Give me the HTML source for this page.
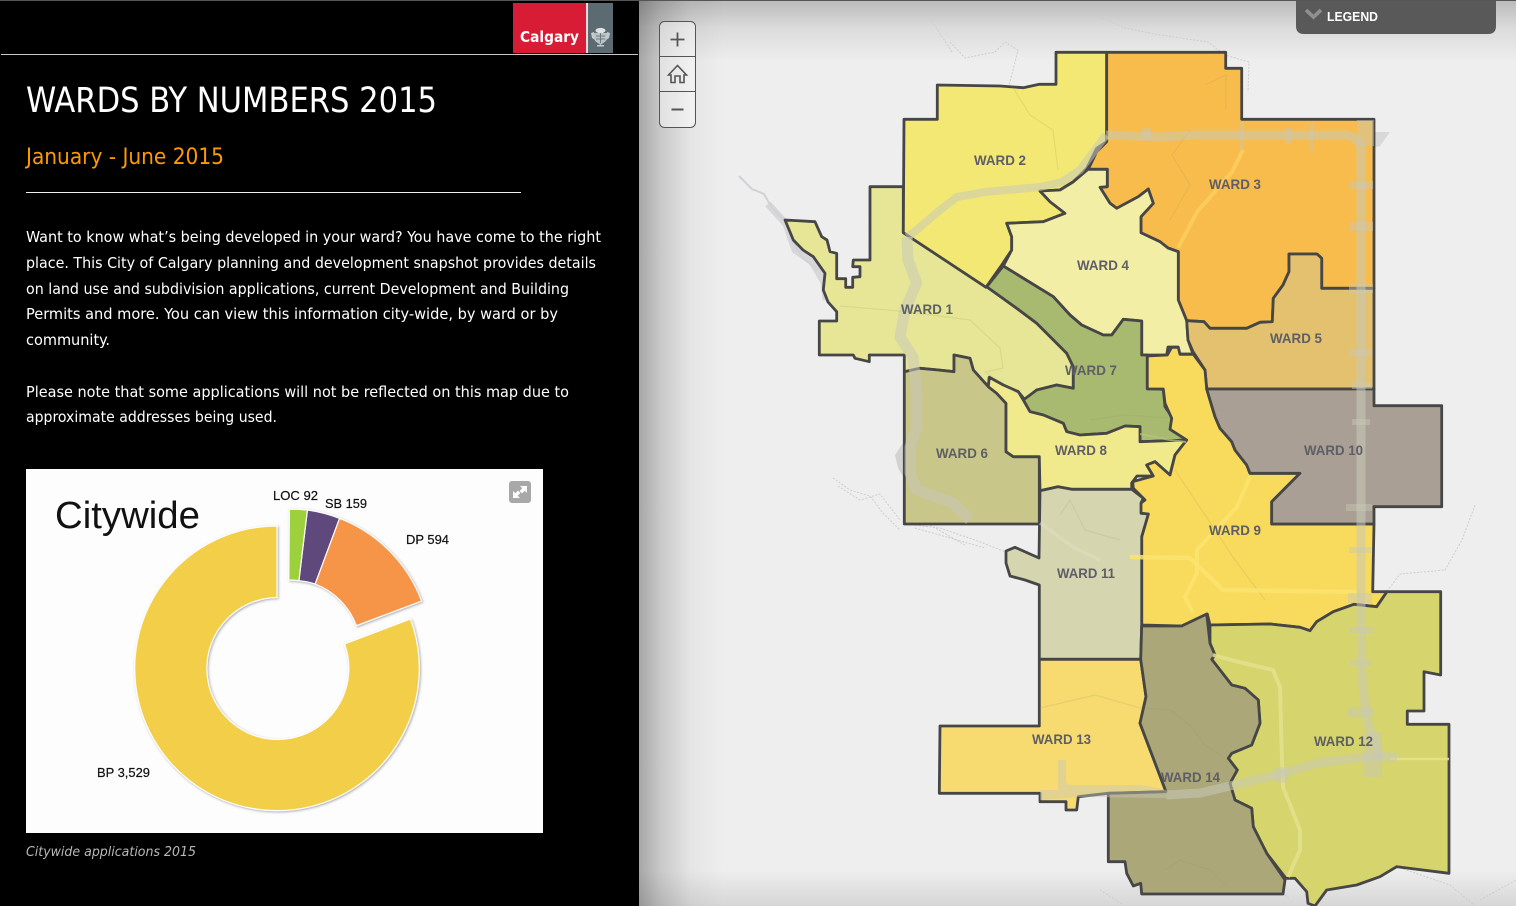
<!DOCTYPE html>
<html lang="en"><head><meta charset="utf-8"><title>Wards by Numbers 2015</title>
<style>
html,body{margin:0;padding:0;background:#000;width:1516px;height:906px;overflow:hidden}
svg{display:block}
.b{font-family:"DejaVu Sans",sans-serif;font-stretch:condensed;font-size:15.5px;fill:#fff}
.w{font-family:"Liberation Sans",sans-serif;font-weight:bold;font-size:14px;fill:#5e5e66}
.c{font-family:"Liberation Sans",sans-serif;font-size:13px;fill:#111;stroke:#111;stroke-width:.2}
.wd polygon{stroke:#464646;stroke-width:2.8;stroke-linejoin:round}
</style></head><body>
<svg xmlns="http://www.w3.org/2000/svg" width="1516" height="906" viewBox="0 0 1516 906">
<defs>
<linearGradient id="gl" x1="0" x2="1" y1="0" y2="0"><stop offset="0" stop-color="#000" stop-opacity=".3"/><stop offset=".25" stop-color="#000" stop-opacity=".16"/><stop offset=".6" stop-color="#000" stop-opacity=".04"/><stop offset="1" stop-color="#000" stop-opacity="0"/></linearGradient>
<linearGradient id="gt" x1="0" x2="0" y1="0" y2="1"><stop offset="0" stop-color="#000" stop-opacity=".22"/><stop offset=".45" stop-color="#000" stop-opacity=".08"/><stop offset="1" stop-color="#000" stop-opacity="0"/></linearGradient>
<linearGradient id="gb" x1="0" x2="0" y1="1" y2="0"><stop offset="0" stop-color="#000" stop-opacity=".1"/><stop offset="1" stop-color="#000" stop-opacity="0"/></linearGradient>
<filter id="sh" x="-10%" y="-10%" width="120%" height="120%"><feDropShadow dx="1" dy="1" stdDeviation="1.2" flood-color="#777" flood-opacity=".6"/></filter>
</defs>

<!-- map background -->
<rect x="639" y="0" width="877" height="906" fill="#eee"/>
<rect x="639" y="0" width="877" height="62" fill="url(#gt)"/>
<rect x="639" y="870" width="877" height="36" fill="url(#gb)"/>
<rect x="639" y="0" width="85" height="906" fill="url(#gl)"/>

<!-- rivers outside the city -->
<g fill="none" stroke="#d2d2d6">
<path d="M739 176L752 189L764 194L772 208L786 222L792 240L803 258L818 270" stroke-width="2"/>
<path d="M768 204L786 224L795 250L812 262L824 282L826 300" stroke-width="7" opacity=".85"/>
</g>
<g fill="none" stroke="#cdcdcd" stroke-width="1" stroke-dasharray="2 1.5">
<path d="M930 18L952 52M950 42L965 58L995 52L1005 42L1018 50L1009 86"/>
<path d="M1092 14L1125 28L1160 35L1208 42L1225 55L1249 62L1248 92"/>
<path d="M833 478L850 490L870 496L882 512L900 530"/>
<path d="M838 486L860 500L880 494L900 520M905 524L940 528L975 540L1006 552"/>
<path d="M915 528L950 538L985 548M930 525L965 545"/>
<path d="M1475 505L1462 540L1445 570L1400 574L1388 590"/>
<path d="M1270 880L1290 900M1400 868L1450 885L1475 906M1100 890L1125 906M1480 900L1516 880"/>
</g>
<path d="M1374 132L1390 132L1380 146L1374 148Z" fill="#d8d8d8"/>
<path d="M895 455L905 440L905 480L898 468Z" fill="#d2d2d2"/>

<!-- wards -->
<g class="wd">
<polygon fill="#e6e696" points="986.7,286.7 903.3,232.7 903.3,186.7 870,186.7 870,260 853.3,260 852.7,266.7 860,266.7 860,276.7 852.7,277.3 852.7,287.3 845.7,287.3 845.7,278.7 836.7,278.7 836.7,253.3 830,251.7 827,240 821.7,236.7 815,221.7 785,220 790,232 793.3,240 803,250 813.3,256.7 825,273.3 823.3,290 828,302 836.7,311.7 836.7,321 819.3,321 819.3,355 853.3,355 855,358.3 869.3,361.7 869.3,355 904.3,355 904.3,371.7 920,368.3 938.3,370 954,371.7 954,355 970,358.3 973.3,370 988.3,386.7 989.3,377.3 1003.3,385 1018.3,391.7 1025,400 1036.7,390 1056.7,385 1073.3,388.3 1073.3,366.7 1066.7,353.3 1056.7,343.3 1036.7,323.3 1016.7,308.3"/>
<polygon fill="#f2e873" points="903.3,232.7 904,119.3 937.3,119.3 937.3,85 1000,86 1023.3,87.7 1039.3,84.3 1056,84.3 1056,52.3 1106.7,52.3 1106.7,141.7 1096.7,148.3 1086.7,168.3 1073.3,181.7 1060,190 1040,191 1050,201.7 1065,213.3 1043.3,221.7 1006.7,223.3 1011.7,236.7 1011.7,250 1001.7,265 986,287.3"/>
<polygon fill="#f8bc4c" points="1106.7,52.3 1225.7,52.3 1225.7,68.3 1241.7,68.3 1241.7,119.3 1374,119.3 1374,288.3 1321.7,288.3 1321.7,258.3 1317,254 1289,254 1289,271.7 1283,285 1273.3,298.3 1272.3,321.7 1260,322.3 1246.7,328.3 1210,328.3 1204,321.7 1186.7,320.7 1178.3,300 1178.3,251.7 1168,248 1160,241.7 1141,232.7 1141,216.7 1153.3,203.3 1148.3,189 1138.3,196.7 1116.7,208.3 1110,203.3 1100,187.3 1107.3,186.7 1107.3,169.3 1088.3,169.3 1096.7,151.7 1106.7,141.7"/>
<polygon fill="#f3eea6" points="1040,191 1060,190 1073,182 1088,169.3 1107.3,169.3 1107.3,186.7 1100,187.3 1110,203.3 1116.7,208.3 1138.3,196.7 1148.3,189 1153.3,203.3 1141,216.7 1141,232.7 1160,241.7 1168,248 1178.3,251.7 1178.3,300 1186.7,320.7 1188,340 1193,354 1178,354 1178,347 1168,347 1166.7,355 1141.7,355 1141.7,321 1123.3,319.3 1111.7,335 1103.3,335 1081.7,325 1070,315 1053.3,296.7 1003.3,266 1011.7,250 1011.7,236.7 1006.7,223.3 1043.3,221.7 1065,213.3 1050,201.7"/>
<polygon fill="#e3c16e" points="1186.7,320.7 1204,321.7 1210,328.3 1246.7,328.3 1260,322.3 1272.3,321.7 1273.3,298.3 1283,285 1289,271.7 1289,254 1317,254 1321.7,258.3 1321.7,288.3 1374,288.3 1374,389 1206.7,389 1205,370 1193,351.7 1188,340"/>
<polygon fill="#c9c68a" points="904.3,371.7 920,368.3 938.3,370 954,371.7 954,355 970,358.3 973.3,370 988.3,386.7 996.7,393.3 1006,403.3 1006,451.7 1013.3,456.7 1039.3,456.7 1039.3,524 904.3,524"/>
<polygon fill="#a8ba70" points="1003.3,266 1053.3,296.7 1070,315 1081.7,325 1103.3,335 1111.7,335 1123.3,319.3 1141.7,321 1141.7,355 1147.3,355 1147.3,388.3 1163.3,389.3 1165,406.7 1171.7,416.7 1171.7,430 1186.7,440 1140,441.7 1140,426.7 1125,426 1106.7,433.3 1080,435 1066.7,431.7 1063.3,423.3 1043.3,415 1030,411.7 1023.3,400 1036.7,390 1056.7,385 1073.3,388.3 1073.3,366.7 1066.7,353.3 1056.7,343.3 1036.7,323.3 1016.7,308.3 986.7,286.7"/>
<polygon fill="#f1ea8d" points="989.3,377.3 1003.3,385 1018.3,391.7 1023.3,400 1030,411.7 1043.3,415 1063.3,423.3 1066.7,431.7 1080,435 1106.7,433.3 1125,426 1140,426.7 1140,441.7 1186.7,440 1175,455 1170,475 1155,461.7 1146.7,465 1153.3,476 1137,476 1131.7,483 1131.7,489.3 1071.7,489.3 1058,486.7 1040,490.7 1039.3,456.7 1013.3,456.7 1006,451.7 1006,403.3 996.7,393.3 988.3,386.7"/>
<polygon fill="#f8da5c" points="1147.3,356 1167.3,355 1171.7,347.3 1178.3,347.3 1180,354.3 1193.3,354.3 1205,370 1206.7,389 1215,416.7 1220,428.3 1231.7,441.7 1235,450 1246.7,465 1250,473.3 1300,473.3 1271.7,501.7 1271.7,524 1374,524 1372.7,591.7 1387,591.7 1376.7,606.7 1354,604.3 1333.3,611.7 1316.7,621.7 1310,630.7 1300,627.3 1270,624 1210,625 1207.3,614 1181.7,626 1141.7,625 1141.7,536.7 1148.3,514 1140.7,513.3 1140.7,503.3 1145,500 1133.3,488.3 1132.7,481.7 1153.3,476 1146.7,465 1155,461.7 1170,475 1175,455 1186.7,440 1170,429.3 1171.7,418.3 1165,403.3 1163.3,389 1147.3,389"/>
<polygon fill="#a99f94" points="1206.7,389 1374,389 1374,405.7 1441.7,405.7 1441.7,506.7 1374,506.7 1374,524 1271.7,524 1271.7,501.7 1300,473.3 1250,473.3 1246.7,465 1235,450 1231.7,441.7 1220,428.3 1215,416.7"/>
<polygon fill="#d5d5b0" points="1040,490.7 1058,486.7 1071.7,489.3 1131.7,489.3 1143.3,498.3 1141,503 1141,513.3 1148.3,514 1141.7,536.7 1141.7,625 1140.7,659.3 1039.3,659.3 1039.3,585 1025,580 1010,576 1006,563 1006,551 1015,547.3 1039,558"/>
<polygon fill="#d6d46c" points="1387,591.7 1440.7,591.7 1440.7,675 1424,671.7 1424,711 1407.3,711 1407.3,724.3 1449,724.3 1449,873.3 1396.7,866.7 1380,876.7 1356.7,885 1326.7,890 1315,906 1308,903.3 1306.7,891.7 1295,878.3 1286,878.3 1266.7,853.3 1253.3,826.7 1251.7,808.3 1235,800 1230,783.3 1237.3,770 1228.3,758.3 1231.7,753.3 1251.7,745 1260,723.3 1258.3,700 1245,688.3 1231.7,685 1211.7,659.3 1215,655 1210,643.3 1210,625 1270,624 1300,627.3 1310,630.7 1316.7,621.7 1333.3,611.7 1354,604.3 1376.7,606.7"/>
<polygon fill="#f7da70" points="1039.3,659.3 1140.7,659.3 1146,696.7 1140,723.3 1166,791.7 1108.3,793.3 1078.3,796.7 1076.7,810 1066,810 1066,801.7 1040,801.7 1040,793.3 939.3,793.3 940,726 1039.3,726"/>
<polygon fill="#aba778" points="1141.7,626 1181.7,626 1206.7,614 1210,643.3 1215,655 1211.7,659.3 1231.7,685 1245,688.3 1258.3,700 1260,723.3 1251.7,745 1231.7,753.3 1228.3,758.3 1237.3,770 1230,783.3 1235,800 1251.7,808.3 1253.3,826.7 1266.7,853.3 1285,880 1283,894 1141.7,894 1140.7,883.3 1133.3,886 1126.7,873.3 1125,861.7 1108.3,861.7 1108.3,793.3 1166,791.7 1140,723.3 1146,696.7 1140.7,659.3"/>
</g>

<!-- subtle water/streets -->
<g fill="none" stroke="#8a8a62" stroke-opacity=".15" stroke-width="1.2">
<path d="M1012 86L1030 115L1053 130L1058 170"/>
<path d="M1205 85L1226 75L1226 110M1190 130L1172 155L1190 185L1170 220"/>
<path d="M840 306L900 311L970 320L1000 348L1003 368L985 372L1020 395"/>
<path d="M1168 418L1125 415L1090 420"/>
<path d="M1060 515L1070 500L1085 530L1120 540"/>
<path d="M1040 708L1095 695L1140 708L1170 710L1190 725L1205 745L1220 755"/>
<path d="M1165 870L1180 860L1210 870L1225 885"/>
<path d="M1175 470L1235 560L1265 600"/>
</g>

<!-- light roads -->
<g fill="none" stroke-linejoin="round">
<path d="M1243 150L1232 172L1197 212L1178 248" stroke="#fbcf60" stroke-opacity=".8" stroke-width="4"/>
<path d="M1250 477L1237 507L1197 550L1197 573L1185 597L1193 613" stroke="#fbe36e" stroke-width="4" stroke-opacity=".8"/>
<path d="M1130 557L1190 558L1223 590L1357 592" stroke="#fbe36e" stroke-width="4.5" stroke-opacity=".85"/>
<path d="M1213 655L1243 663L1273 670L1280 687L1282 760L1283 787L1300 830L1300 850L1288 877" stroke="#e3e18c" stroke-width="4" stroke-opacity=".85"/>
<path d="M1390 759L1449 759" stroke="#e3e18c" stroke-width="2.5" stroke-opacity=".9"/>
<path d="M1040 523L1073 547L1100 560" stroke="#e2e2c4" stroke-width="3.5" stroke-opacity=".5"/>
<path d="M1140 434L1170 440L1186 442" stroke="#b9c67e" stroke-width="2" stroke-opacity=".7"/>
</g>

<!-- highways -->
<g fill="none" stroke-linejoin="round" stroke="#c8c8b8" stroke-opacity=".55">
<path d="M1106 135L1160 137L1195 135L1240 135L1345 135Q1361 137 1361 152L1361 600L1362 680L1367 720L1380 757" stroke-width="9"/>
<path d="M1106 135L1095 150L1080 170L1062 182L1040 187L985 192L957 197L940 210L913 233L907 237" stroke-width="8"/>
<path d="M907 237L908 260L916.7 283L905 310L900 337L913 357L916.7 393L916.7 427L910 447L910 473L916.7 490L953 503L970 520" stroke-width="11"/>
<path d="M1166 795L1200 793L1277 775L1317 763L1367 757L1397 757" stroke-width="9"/>
</g>
<g fill="#c8c8b8" fill-opacity=".45" stroke="none">
<path d="M1357 120H1374V146H1357Z"/>
<rect x="1349" y="181" width="24" height="8"/><rect x="1349" y="222" width="24" height="9"/><rect x="1349" y="284" width="24" height="9"/>
<rect x="1349" y="349" width="23" height="7"/><rect x="1352" y="382" width="20" height="7"/><rect x="1352" y="419" width="18" height="6"/>
<rect x="1346" y="504" width="26" height="7"/><rect x="1349" y="547" width="22" height="6"/><rect x="1348" y="593" width="24" height="10"/>
<rect x="1350" y="627" width="23" height="6"/><rect x="1350" y="660" width="22" height="6"/><rect x="1348" y="707" width="25" height="10"/>
<rect x="1364" y="732" width="18" height="45"/><rect x="1240" y="122" width="4" height="28"/><rect x="1310" y="124" width="3" height="26"/>
<rect x="1285" y="128" width="6" height="16"/><rect x="1141" y="128" width="10" height="12"/>
<ellipse cx="1281" cy="775" rx="9" ry="8"/>
<path d="M1058 760h8v21q0 4 8 4L1143 785L1166 790L1166 798L1078 797L1040 800L1040 790L1058 790Z"/>
</g>

<!-- ward labels -->
<g>
<text class="w" x="974" y="165" textLength="52" lengthAdjust="spacingAndGlyphs">WARD 2</text>
<text class="w" x="1209" y="189" textLength="52" lengthAdjust="spacingAndGlyphs">WARD 3</text>
<text class="w" x="1077" y="270" textLength="52" lengthAdjust="spacingAndGlyphs">WARD 4</text>
<text class="w" x="901" y="314" textLength="52" lengthAdjust="spacingAndGlyphs">WARD 1</text>
<text class="w" x="1270" y="343" textLength="52" lengthAdjust="spacingAndGlyphs">WARD 5</text>
<text class="w" x="1065" y="375" textLength="52" lengthAdjust="spacingAndGlyphs">WARD 7</text>
<text class="w" x="1055" y="455" textLength="52" lengthAdjust="spacingAndGlyphs">WARD 8</text>
<text class="w" x="936" y="458" textLength="52" lengthAdjust="spacingAndGlyphs">WARD 6</text>
<text class="w" x="1304" y="455" textLength="59" lengthAdjust="spacingAndGlyphs">WARD 10</text>
<text class="w" x="1209" y="535" textLength="52" lengthAdjust="spacingAndGlyphs">WARD 9</text>
<text class="w" x="1057" y="578" textLength="58" lengthAdjust="spacingAndGlyphs">WARD 11</text>
<text class="w" x="1032" y="744" textLength="59" lengthAdjust="spacingAndGlyphs">WARD 13</text>
<text class="w" x="1314" y="746" textLength="59" lengthAdjust="spacingAndGlyphs">WARD 12</text>
<text class="w" x="1161" y="782" textLength="59" lengthAdjust="spacingAndGlyphs">WARD 14</text>
</g>

<!-- zoom controls -->
<rect x="659.5" y="21.5" width="36" height="106" rx="5" fill="#fff" fill-opacity=".45" stroke="#555"/>
<path d="M660 56.5H695M660 91.5H695" stroke="#555" fill="none"/>
<path d="M670.5 39.5H684.5M677.5 32.5V46.5" stroke="#555" stroke-width="1.8" fill="none"/>
<path d="M671.5 109.5H683.5" stroke="#555" stroke-width="2" fill="none"/>
<path d="M668.5 75L677.5 65.5L686.5 75L684 75L684 82.5L680 82.5L680 76L675 76L675 82.5L671 82.5L671 75Z" fill="none" stroke="#555" stroke-width="1.6" stroke-linejoin="miter"/>

<!-- legend -->
<path d="M1296 0H1496V26Q1496 34 1488 34H1304Q1296 34 1296 26Z" fill="#595959"/>
<path d="M1306 10L1313.5 17L1321 10" fill="none" stroke="#8f8f8f" stroke-width="3.6"/>
<text x="1327" y="21" font-family="'Liberation Sans',sans-serif" font-size="13" font-weight="bold" fill="#fff" textLength="51" lengthAdjust="spacingAndGlyphs">LEGEND</text>

<!-- left panel -->
<rect x="0" y="0" width="639" height="906" fill="#000"/>
<rect x="0" y="0" width="1516" height="1" fill="#555"/>
<rect x="1" y="54" width="637" height="1" fill="#c8c8c8"/>
<rect x="513" y="3" width="73" height="50" fill="#d91c36"/>
<rect x="586" y="3" width="2" height="50" fill="#f0d8dc"/>
<rect x="588" y="3" width="25" height="50" fill="#5c6b72"/>
<text x="520" y="42" font-family="'DejaVu Sans',sans-serif" font-weight="bold" font-size="15" fill="#fff" textLength="59" lengthAdjust="spacingAndGlyphs">Calgary</text>
<g fill="#dfe3e5">
<ellipse cx="600.5" cy="30.5" rx="5" ry="2.6"/>
<path d="M594 33H607L606 41L600.5 45L595 41Z" fill-opacity=".72"/>
<path d="M591 33L594 32L595 40L592 38ZM610 33L607 32L606 40L609 38ZM597 45H604V46.5H597Z" fill-opacity=".8"/>
</g>
<path d="M596 36H605M596 39H605M600.5 33V43" stroke="#5c6b72" stroke-width=".8" fill="none"/>

<text x="26" y="112" font-family="'DejaVu Sans',sans-serif" font-size="35" fill="#fff" style="font-stretch:condensed" textLength="411" lengthAdjust="spacingAndGlyphs">WARDS BY NUMBERS 2015</text>
<text x="26" y="164" font-family="'DejaVu Sans',sans-serif" font-size="22.5" fill="#f90" style="font-stretch:condensed" textLength="198" lengthAdjust="spacingAndGlyphs">January - June 2015</text>
<rect x="26" y="192" width="495" height="1" fill="#f0f0f0"/>

<text class="b" x="26" y="242" textLength="575" lengthAdjust="spacingAndGlyphs">Want to know what’s being developed in your ward? You have come to the right</text>
<text class="b" x="26" y="268" textLength="570" lengthAdjust="spacingAndGlyphs">place. This City of Calgary planning and development snapshot provides details</text>
<text class="b" x="26" y="294" textLength="543" lengthAdjust="spacingAndGlyphs">on land use and subdivision applications, current Development and Building</text>
<text class="b" x="26" y="319" textLength="532" lengthAdjust="spacingAndGlyphs">Permits and more. You can view this information city-wide, by ward or by</text>
<text class="b" x="26" y="345" textLength="84" lengthAdjust="spacingAndGlyphs">community.</text>
<text class="b" x="26" y="397" textLength="543" lengthAdjust="spacingAndGlyphs">Please note that some applications will not be reflected on this map due to</text>
<text class="b" x="26" y="422" textLength="251" lengthAdjust="spacingAndGlyphs">approximate addresses being used.</text>

<!-- chart -->
<rect x="26" y="469" width="517" height="364" fill="#fdfdfd"/>
<text x="55" y="528" font-family="'Liberation Sans',sans-serif" font-size="38" fill="#111" textLength="145" lengthAdjust="spacingAndGlyphs">Citywide</text>
<g filter="url(#sh)" stroke="#fff" stroke-width="1.2">
<path d="M277 526A142.3 142.3 0 1 0 410.5 619L344.5 644A71 71 0 1 1 277 597.5Z" fill="#f3ce48"/>
<path d="M339.5 518.3A142.3 142.3 0 0 1 421.6 601L356.4 625.7A71 71 0 0 0 315.1 584Z" fill="#f69547"/>
<path d="M307.4 510A142.3 142.3 0 0 1 339.5 518.3L315.1 584A71 71 0 0 0 298.9 580.7Z" fill="#5e4a7c"/>
<path d="M289.4 509.3A142.3 142.3 0 0 1 307.4 510L298.9 580.7A71 71 0 0 0 288.8 580Z" fill="#9dd03c"/>
</g>
<text class="c" x="273" y="500" textLength="45" lengthAdjust="spacingAndGlyphs">LOC 92</text>
<text class="c" x="325" y="508" textLength="42" lengthAdjust="spacingAndGlyphs">SB 159</text>
<text class="c" x="406" y="544" textLength="43" lengthAdjust="spacingAndGlyphs">DP 594</text>
<text class="c" x="97" y="777" textLength="53" lengthAdjust="spacingAndGlyphs">BP 3,529</text>
<rect x="509" y="481" width="22" height="22" rx="3" fill="#a8a8a8"/>
<path d="M520 486H527V493L524.7 490.7L522 493.4L519.6 491L522.3 488.3Z M520 498H513V491L515.3 493.3L518 490.6L520.4 493L517.7 495.7Z" fill="#fff"/>
<text x="26" y="856" font-family="'DejaVu Sans',sans-serif" font-size="13.5" font-style="italic" fill="#b8b8b8" style="font-stretch:condensed" textLength="170" lengthAdjust="spacingAndGlyphs">Citywide applications 2015</text>
</svg>
</body></html>
